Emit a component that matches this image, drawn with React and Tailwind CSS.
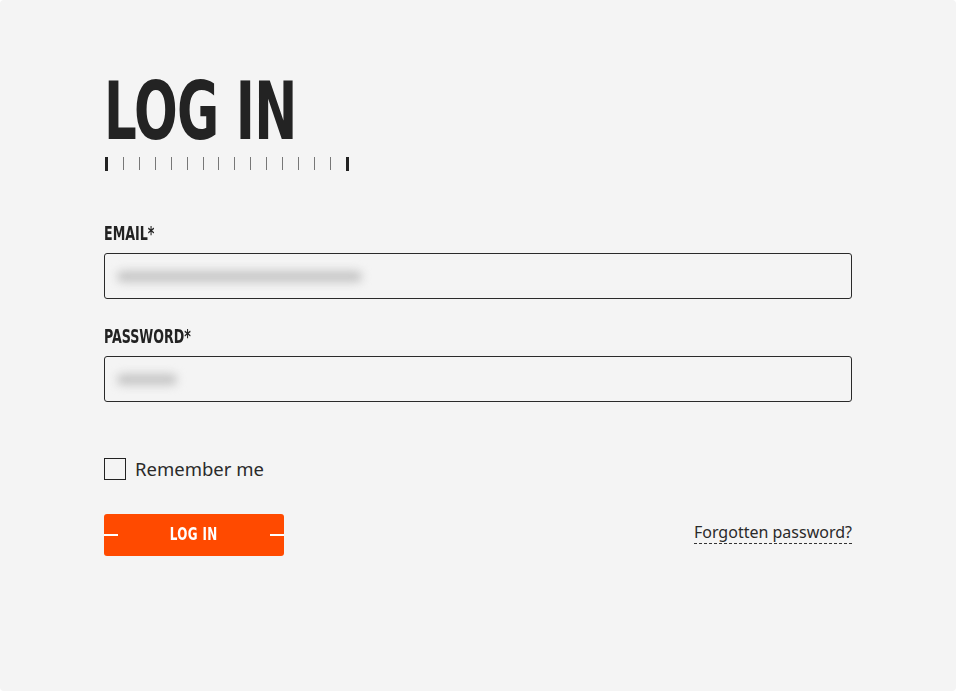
const condensed = { fontFamily: '"DejaVu Sans Condensed", "DejaVu Sans", sans-serif' };
const body = { fontFamily: '"Noto Sans", "Open Sans", sans-serif' };

function Ticks() {
  const ticks = Array.from({ length: 16 }, (_, i) => i);
  return (
    <div className="flex items-center justify-between w-[244px] h-[15px] mt-[4px] ml-[1px]">
      {ticks.map((i) =>
        i === 0 || i === 15 ? (
          <span key={i} className="block w-[3px] h-[14px] bg-[#222]" />
        ) : (
          <span key={i} className="block w-[1px] h-[13px] bg-[#777]" />
        )
      )}
    </div>
  );
}

function Field({ label, blurWidth }) {
  return (
    <div className="flex flex-col">
      <label
        className="text-[19px] font-bold text-[#222] leading-none origin-left scale-x-[0.74] inline-block whitespace-nowrap"
        style={condensed}
      >
        {label}
      </label>
      <div className="mt-[10px] h-[46px] border border-[#2a2a2a] rounded-[3px] flex items-center px-[12px] bg-[#f4f4f4]">
        <div className={`h-[11px] rounded-full bg-[#c4c4c4] blur-[5px] ${blurWidth}`} />
      </div>
    </div>
  );
}

export default function App() {
  return (
    <div className="w-[956px] h-[691px] bg-[#f4f4f4] rounded-[4px] overflow-hidden">
      <div className="pl-[104px] pr-[104px] pt-[72px]">
        <h1
          className="text-[80px] font-bold text-[#232323] leading-none origin-left scale-x-[0.715] inline-block whitespace-nowrap tracking-[-1px]"
          style={condensed}
        >
          LOG IN
        </h1>
        <Ticks />

        <div className="mt-[53px] flex flex-col gap-[28px]">
          <Field label="EMAIL*" blurWidth="w-[245px]" />
          <Field label="PASSWORD*" blurWidth="w-[60px]" />
        </div>

        <div className="mt-[53px] flex items-center gap-[9px]">
          <span className="block w-[22px] h-[22px] border-[1.5px] border-[#222] bg-[#f4f4f4]" />
          <span className="text-[18.5px] text-[#2a2a2a]" style={body}>
            Remember me
          </span>
        </div>

        <div className="mt-[31px] flex items-center justify-between">
          <button className="relative w-[180px] h-[42px] bg-[#ff4a00] rounded-[3px] flex items-center justify-center">
            <span className="absolute left-0 top-[20px] w-[14px] h-[2px] bg-white" />
            <span className="absolute right-0 top-[20px] w-[14px] h-[2px] bg-white" />
            <span
              className="text-[17px] font-bold text-white tracking-[0.5px] inline-block scale-x-[0.78]"
              style={condensed}
            >
              LOG IN
            </span>
          </button>
          <a
            className="text-[16px] text-[#2a2a2a] border-b border-dashed border-[#333] leading-[22px] mb-[4px]"
            style={body}
          >
            Forgotten password?
          </a>
        </div>
      </div>
    </div>
  );
}
